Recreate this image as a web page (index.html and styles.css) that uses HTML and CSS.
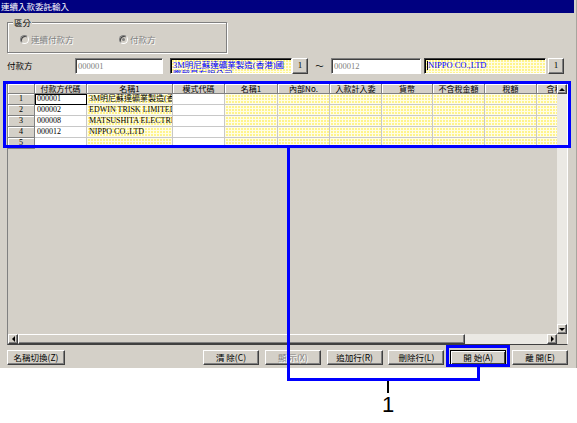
FILE: index.html
```html
<!DOCTYPE html>
<html lang="zh-Hant">
<head>
<meta charset="utf-8">
<title>連續入款委託輸入</title>
<link rel="stylesheet" href="styles.css">
</head>
<body>
<div class="page">
  <div class="window">
    <div class="titlebar">連續入款委託輸入</div>

    <fieldset class="group">
      <legend>區分</legend>
      <div class="radios">
        <label class="radio first"><span class="dot"></span><span class="dis">連續付款方</span></label>
        <label class="radio checked"><span class="dot"></span><span class="dis">付款方</span></label>
      </div>
    </fieldset>

    <div class="payer-row">
      <span class="lbl">付款方</span>
      <div class="tb code">000001</div>
      <div class="tb name">3M明尼蘇達礦業製造(香港)國際貿易有限公司</div>
      <div class="btn mini">1</div>
      <span class="tilde">～</span>
      <div class="tb code code2">000012</div>
      <div class="tb name name2"><span class="caret"></span>NIPPO CO.,LTD</div>
      <div class="btn mini last">1</div>
    </div>

    <div class="grid">
      <div class="grid-main">
        <div class="cells">
          <div class="hc"></div>
          <div class="hc">付款方代碼</div>
          <div class="hc">名稱1</div>
          <div class="hc">模式代碼</div>
          <div class="hc">名稱1</div>
          <div class="hc">內部No.</div>
          <div class="hc">入款計入委</div>
          <div class="hc">貨幣</div>
          <div class="hc">不含稅金額</div>
          <div class="hc">稅額</div>
          <div class="hc">含稅金額</div>

          <div class="rh">1</div>
          <div class="c w focus">000001</div>
          <div class="c y">3M明尼蘇達礦業製造(香港)國際貿易有限公司</div>
          <div class="c w"></div>
          <div class="c y"></div><div class="c y"></div><div class="c y"></div><div class="c y"></div><div class="c y"></div><div class="c y"></div><div class="c y"></div>

          <div class="rh">2</div>
          <div class="c w">000002</div>
          <div class="c y">EDWIN TRISK LIMITED</div>
          <div class="c w"></div>
          <div class="c y"></div><div class="c y"></div><div class="c y"></div><div class="c y"></div><div class="c y"></div><div class="c y"></div><div class="c y"></div>

          <div class="rh">3</div>
          <div class="c w">000008</div>
          <div class="c y">MATSUSHITA ELECTRIC</div>
          <div class="c w"></div>
          <div class="c y"></div><div class="c y"></div><div class="c y"></div><div class="c y"></div><div class="c y"></div><div class="c y"></div><div class="c y"></div>

          <div class="rh">4</div>
          <div class="c w">000012</div>
          <div class="c y">NIPPO CO.,LTD</div>
          <div class="c w"></div>
          <div class="c y"></div><div class="c y"></div><div class="c y"></div><div class="c y"></div><div class="c y"></div><div class="c y"></div><div class="c y"></div>

          <div class="rh">5</div>
          <div class="c w"></div>
          <div class="c y"></div>
          <div class="c w"></div>
          <div class="c y"></div><div class="c y"></div><div class="c y"></div><div class="c y"></div><div class="c y"></div><div class="c y"></div><div class="c y"></div>
        </div>
        <div class="vscroll">
          <div class="raised arr up"></div>
          <div class="track"></div>
          <div class="raised arr down"></div>
        </div>
      </div>
      <div class="hscroll">
        <div class="raised arr left"></div>
        <div class="raised thumb"></div>
        <div class="track"></div>
        <div class="raised arr right"></div>
        <div class="corner"></div>
      </div>
    </div>

    <div class="buttons">
      <div class="btn wide">名稱切換(<u>Z</u>)</div>
      <div class="btn-group">
        <div class="btn">清 除(<u>C</u>)</div>
        <div class="btn disabled"><span class="dis">顯 示(<u>X</u>)</span></div>
        <div class="btn">追加行(<u>R</u>)</div>
        <div class="btn">刪除行(<u>L</u>)</div>
        <div class="btn default">開 始(<u>A</u>)</div>
        <div class="btn">離 開(<u>E</u>)</div>
      </div>
    </div>
  </div>

  <div class="mark box-grid"></div>
  <div class="mark line v1"></div>
  <div class="mark line h1"></div>
  <div class="mark line v2"></div>
  <div class="mark box-btn"></div>
  <div class="mark tick"></div>
  <div class="mark callout">1</div>
</div>
</body>
</html>
```

FILE: styles.css
```css
* { box-sizing: border-box; }

html, body {
  margin: 0;
  padding: 0;
  background: #fff;
}

body {
  width: 577px;
  height: 423px;
  overflow: hidden;
  font-family: "Noto Sans CJK TC", "Liberation Sans", sans-serif;
  font-size: 8.5px;
  color: #000;
}

.page {
  position: relative;
  width: 577px;
  height: 423px;
}

.window {
  width: 577px;
  height: 368px;
  background: #d4d0c8;
  padding-right: 2px;
  border-right: 1px solid #a8a59e;
  display: flex;
  flex-direction: column;
}

.titlebar {
  height: 13px;
  line-height: 13px;
  background: #000080;
  color: #fff;
  padding-left: 1px;
  white-space: nowrap;
}

/* group box */
.group {
  margin: 3px 0 0 7px;
  width: 220px;
  min-width: 0;
  padding: 6px 0 7px 5px;
  border: 1px solid #808080;
  box-shadow: inset 1px 1px 0 #fff, 1px 1px 0 #fff;
}

.group legend {
  padding: 0 1px;
  line-height: 12px;
  background: #d4d0c8;
}

.radios {
  display: flex;
  height: 11px;
  align-items: center;
  margin-left: 7px;
}

.radio {
  display: flex;
  align-items: center;
  line-height: 11px;
}

.radio.first { width: 99px; }

.dot {
  width: 9px;
  height: 9px;
  border-radius: 50%;
  border: 1px solid;
  border-color: #808080 #fff #fff #808080;
  background: #d4d0c8;
  box-shadow: inset 1px 1px 0 #404040;
  margin-right: 2px;
  display: inline-flex;
  align-items: center;
  justify-content: center;
}

.radio.checked .dot::after {
  content: "";
  width: 3px;
  height: 3px;
  border-radius: 50%;
  background: #808080;
}

.dis {
  color: #808080;
  text-shadow: 1px 1px 0 #fff;
}

/* payer row */
.payer-row {
  display: flex;
  align-items: flex-start;
  margin-top: 5px;
  padding-left: 7px;
  height: 17px;
}

.lbl {
  width: 68px;
  line-height: 14px;
}

.tb {
  height: 16px;
  border: 1px solid;
  border-color: #808080 #fff #fff #808080;
  box-shadow: inset 1px 1px 0 #404040;
  background: #fff;
  overflow: hidden;
  padding: 1px 0 0 2px;
  font-family: "Liberation Serif", "Noto Sans CJK TC", serif;
}

.tb.code {
  width: 88px;
  margin-right: 7px;
  color: #808080;
  line-height: 12px;
}

.tb.code2 { width: 90px; margin-right: 3px; }

.tb.name {
  width: 122px;
  color: #0000ff;
  line-height: 9px;
  padding-top: 2px;
  border-color: #404040 #fff #fff #404040;
  box-shadow: inset 1px 1px 0 #000;
  background-color: #fff48c;
  background-image:
    linear-gradient(90deg, #fffde6 1px, transparent 1px),
    linear-gradient(#fffde6 1px, transparent 1px);
  background-size: 3px 3px;
}

.tb.name2 { margin-right: 2px; }

.caret {
  display: inline-block;
  width: 1px;
  height: 9px;
  background: #000;
  vertical-align: top;
}

.tilde {
  width: 23px;
  text-align: center;
  line-height: 14px;
}

/* buttons */
.btn {
  height: 15px;
  width: 56px;
  background: #d4d0c8;
  border: 1px solid;
  border-color: #fff #404040 #404040 #fff;
  box-shadow: inset -1px -1px 0 #808080;
  text-align: center;
  line-height: 12px;
  white-space: nowrap;
}

.btn u { text-decoration: none; }

.btn.mini {
  width: 16px;
  height: 16px;
  font-family: "Liberation Serif", serif;
  font-size: 9px;
  line-height: 13px;
}

.btn.default {
  border-color: #000;
  box-shadow: inset 1px 1px 0 #fff, inset -1px -1px 0 #404040;
}

/* grid */
.grid {
  margin: 8px 0 0 7px;
  width: 561px;
  height: 262px;
  border: 1px solid;
  border-color: #808080 #fff #404040 #808080;
  display: flex;
  flex-direction: column;
  background: #d4d0c8;
}

.grid-main {
  display: flex;
  height: 250px;
}

.cells {
  width: 549px;
  height: 250px;
  overflow: hidden;
  display: grid;
  grid-template-columns: 27px 52px 86px 52px 53px 52px 52px 51px 52px 52px 52px;
  grid-template-rows: 10px repeat(5, 11px);
  align-content: start;
}

.hc, .rh {
  background: #d4d0c8;
  color: #000;
  border-right: 1px solid #808080;
  border-bottom: 1px solid #808080;
  box-shadow: inset 1px 1px 0 #fff;
  text-align: center;
  overflow: hidden;
  white-space: nowrap;
}

.hc {
  font-size: 8px;
  line-height: 10px;
}

.rh {
  font-family: "Liberation Serif", serif;
  font-size: 8px;
  line-height: 10px;
}

.c {
  color: #000;
  border-right: 1px solid #c8c8c8;
  border-bottom: 1px solid #c8c8c8;
  overflow: hidden;
  white-space: nowrap;
  font-family: "Liberation Serif", "Noto Sans CJK TC", serif;
  font-size: 8px;
  line-height: 10px;
  padding-left: 2px;
}

.c.w { background: #fff; }

.c.y {
  background-color: #fff48c;
  background-image:
    linear-gradient(90deg, #fffde6 1px, transparent 1px),
    linear-gradient(#fffde6 1px, transparent 1px);
  background-size: 3px 3px;
}

.c.focus {
  outline: 1px solid #000;
  outline-offset: -1px;
}

.vscroll {
  width: 10px;
  display: flex;
  flex-direction: column;
}

.hscroll {
  height: 10px;
  display: flex;
}

.raised {
  background: #d4d0c8;
  border: 1px solid;
  border-color: #fff #404040 #404040 #fff;
  box-shadow: inset -1px -1px 0 #808080;
}

.arr {
  width: 10px;
  height: 10px;
  display: flex;
  align-items: center;
  justify-content: center;
  flex: none;
}

.arr::after { content: ""; width: 0; height: 0; }

.arr.up::after {
  border-left: 3px solid transparent;
  border-right: 3px solid transparent;
  border-bottom: 3px solid #000;
}

.arr.down::after {
  border-left: 3px solid transparent;
  border-right: 3px solid transparent;
  border-top: 3px solid #000;
}

.arr.left::after {
  border-top: 3px solid transparent;
  border-bottom: 3px solid transparent;
  border-right: 3px solid #000;
}

.arr.right::after {
  border-top: 3px solid transparent;
  border-bottom: 3px solid transparent;
  border-left: 3px solid #000;
}

.track {
  flex: 1;
  background: #ebe9e4;
}

.thumb {
  width: 447px;
  height: 10px;
  flex: none;
}

.corner {
  width: 10px;
  height: 10px;
  background: #d4d0c8;
  flex: none;
}

.buttons {
  display: flex;
  justify-content: space-between;
  margin: 5px 0 0 7px;
  width: 561px;
}

.btn.wide { width: 58px; }

.btn-group {
  display: flex;
  gap: 5.8px;
}

/* annotation overlay */
.mark { position: absolute; }

.box-grid {
  left: 3px;
  top: 81px;
  width: 568px;
  height: 67px;
  border: 3px solid #0000ff;
}

.line { background: #0000ff; }

.v1 { left: 287px; top: 148px; width: 3px; height: 233px; }
.h1 { left: 287px; top: 378px; width: 193px; height: 3px; }
.v2 { left: 477px; top: 366px; width: 3px; height: 14px; }

.box-btn {
  left: 446px;
  top: 345px;
  width: 64px;
  height: 22px;
  border: 3px solid #0000ff;
}

.tick {
  left: 387px;
  top: 381px;
  width: 2px;
  height: 12px;
  background: #000;
}

.callout {
  left: 380px;
  top: 394px;
  width: 16px;
  text-align: center;
  font-family: "Liberation Sans", sans-serif;
  font-size: 22px;
  line-height: 22px;
  color: #000;
}
```
